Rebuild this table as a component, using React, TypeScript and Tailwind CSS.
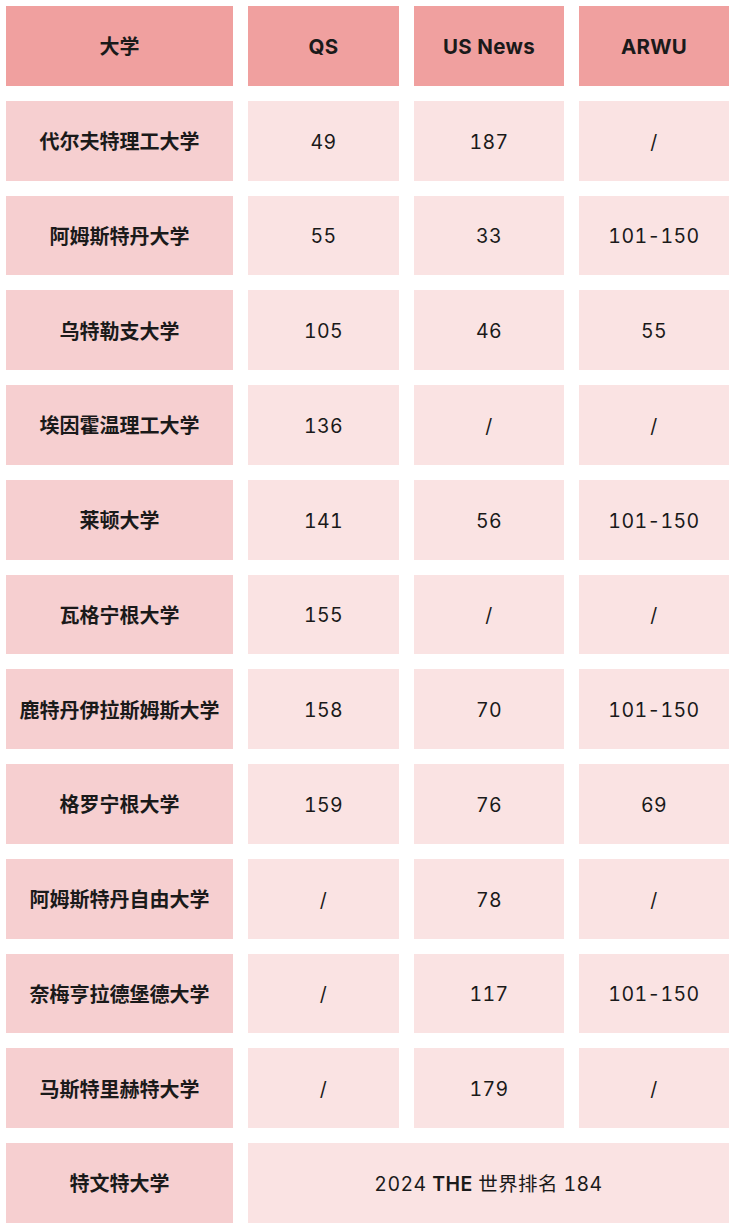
const rows: [string, string, string, string][] = [
  ['代尔夫特理工大学', '49', '187', '/'],
  ['阿姆斯特丹大学', '55', '33', '101-150'],
  ['乌特勒支大学', '105', '46', '55'],
  ['埃因霍温理工大学', '136', '/', '/'],
  ['莱顿大学', '141', '56', '101-150'],
  ['瓦格宁根大学', '155', '/', '/'],
  ['鹿特丹伊拉斯姆斯大学', '158', '70', '101-150'],
  ['格罗宁根大学', '159', '76', '69'],
  ['阿姆斯特丹自由大学', '/', '78', '/'],
  ['奈梅亨拉德堡德大学', '/', '117', '101-150'],
  ['马斯特里赫特大学', '/', '179', '/'],
];

const font = { fontFamily: 'Inter, "Noto Sans CJK SC", sans-serif' };

function Cell({ children, className = '' }: { children: React.ReactNode; className?: string }) {
  return (
    <div className={`flex items-center justify-center pt-[3px] text-[#1a1a1a] ${className}`}>
      {children}
    </div>
  );
}

export default function App() {
  return (
    <div className="w-[738px] min-h-[1230px] bg-white" style={font}>
      <div className="grid grid-cols-[227px_151px_150px_150px] auto-rows-[79.75px] gap-x-[15px] gap-y-[15px] pl-[6px] pt-[6px]">
        <Cell className="bg-[#f0a09f] font-bold text-[20px]">大学</Cell>
        <Cell className="bg-[#f0a09f] font-bold text-[20.5px] tracking-[0.3px]">QS</Cell>
        <Cell className="bg-[#f0a09f] font-bold text-[20.5px] tracking-[0.3px]">US News</Cell>
        <Cell className="bg-[#f0a09f] font-bold text-[20.5px] tracking-[0.3px]">ARWU</Cell>

        {rows.map(([name, qs, usn, arwu]) => (
          <div key={name} className="contents">
            <Cell className="bg-[#f6cfd0] font-bold text-[20px]">{name}</Cell>
            <Cell className="bg-[#fae3e3] text-[19.5px] tabular-nums tracking-[0.4px]">{qs}</Cell>
            <Cell className="bg-[#fae3e3] text-[19.5px] tabular-nums tracking-[0.4px]">{usn}</Cell>
            <Cell className="bg-[#fae3e3] text-[19.5px] tabular-nums tracking-[0.4px]">{arwu}</Cell>
          </div>
        ))}

        <Cell className="bg-[#f6cfd0] font-bold text-[20px]">特文特大学</Cell>
        <Cell className="col-span-3 bg-[#fae3e3] text-[19.5px] tabular-nums tracking-[0.4px]">
          <span>
            2024 <span className="font-semibold">THE</span> 世界排名 184
          </span>
        </Cell>
      </div>
    </div>
  );
}
